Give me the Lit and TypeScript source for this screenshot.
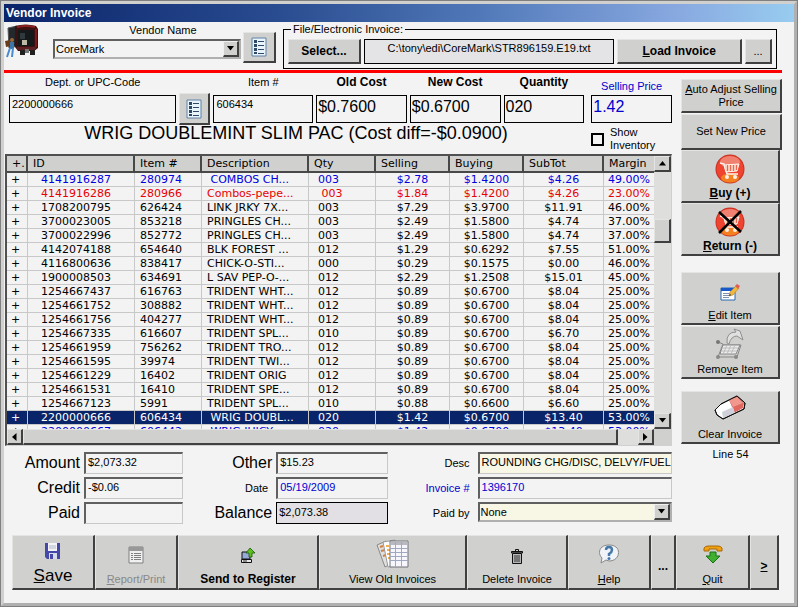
import { LitElement, html, svg, css } from "lit";
import { customElement, property } from "lit/decorators.js";
import { classMap } from "lit/directives/class-map.js";

type Row = [id: string, item: string, desc: string, qty: string, sell: string, buy: string, sub: string, margin: string, kind?: string];

const ROWS: Row[] = [
  ["4141916287", "280974", " COMBOS CH...", "003", "$2.78", "$1.4200", "$4.26", "49.00%", "blue"],
  ["4141916286", "280966", "Combos-pepe...", " 003", "$1.84", "$1.4200", "$4.26", "23.00%", "red"],
  ["1708200795", "626424", "LINK JRKY 7X...", "003", "$7.29", "$3.9700", "$11.91", "46.00%"],
  ["3700023005", "853218", "PRINGLES CH...", "003", "$2.49", "$1.5800", "$4.74", "37.00%"],
  ["3700022996", "852772", "PRINGLES CH...", "003", "$2.49", "$1.5800", "$4.74", "37.00%"],
  ["4142074188", "654640", "BLK FOREST ...", "012", "$1.29", "$0.6292", "$7.55", "51.00%"],
  ["4116800636", "838417", "CHICK-O-STI...", "000", "$0.29", "$0.1575", "$0.00", "46.00%"],
  ["1900008503", "634691", "L SAV PEP-O-...", "012", "$2.29", "$1.2508", "$15.01", "45.00%"],
  ["1254667437", "616763", "TRIDENT WHT...", "012", "$0.89", "$0.6700", "$8.04", "25.00%"],
  ["1254661752", "308882", "TRIDENT WHT...", "012", "$0.89", "$0.6700", "$8.04", "25.00%"],
  ["1254661756", "404277", "TRIDENT WHT...", "012", "$0.89", "$0.6700", "$8.04", "25.00%"],
  ["1254667335", "616607", "TRIDENT SPL...", "010", "$0.89", "$0.6700", "$6.70", "25.00%"],
  ["1254661959", "756262", "TRIDENT TRO...", "012", "$0.89", "$0.6700", "$8.04", "25.00%"],
  ["1254661595", "39974", "TRIDENT TWI...", "012", "$0.89", "$0.6700", "$8.04", "25.00%"],
  ["1254661229", "16402", "TRIDENT ORIG", "012", "$0.89", "$0.6700", "$8.04", "25.00%"],
  ["1254661531", "16410", "TRIDENT SPE...", "012", "$0.89", "$0.6700", "$8.04", "25.00%"],
  ["1254667123", "5991", "TRIDENT SPL...", "010", "$0.88", "$0.6600", "$6.60", "25.00%"],
  ["2200000666", "606434", " WRIG DOUBL...", "020", "$1.42", "$0.6700", "$13.40", "53.00%", "selected"],
  ["2200000667", "606442", " WRIG JUICY...", "020", "$1.42", "$0.6700", "$13.40", "53.00%", "blue"],
];

const cart = svg`<path d="M5 9l4 1 3 10h11" stroke="#fff4ec" stroke-width="1.5"/><path d="M9 11l15-1-2 7-11 1z" fill="#f8c8b8" stroke="#fff4ec"/><path d="M12.500 11v6M15.500 11v6M18.500 11v6M21.500 11v5" stroke="#e86850" stroke-width="1"/><circle cx="12" cy="23" r="2" fill="#fff0e8"/><circle cx="20" cy="23" r="2" fill="#fff0e8"/>`;
const ball = svg`<circle cx="15" cy="15" r="14.5" fill="#c83020"/><circle cx="15" cy="15" r="13.5" fill="#ee4430"/><ellipse cx="15" cy="24" rx="9" ry="4.5" fill="#f48020"/><ellipse cx="15" cy="8" rx="10" ry="6" fill="#f08070"/>`;

const ICONS: Record<string, [number, number, unknown]> = {
  truck: [34, 35, svg`
    <path d="M3 4l9-2 1 20-9 2z" fill="#23282c" stroke="#555" stroke-width="1"/>
    <path d="M10 2q11-3 21 0l2 3v19l-4 3H13l-3-4z" fill="#3b1010"/>
    <path d="M12 3q9-2 18 0" stroke="#8c2020" stroke-width="2" fill="none"/>
    <path d="M13 6h16v16H13z" fill="#15191a"/><path d="M15 9h5v6h-5z" fill="#30393b"/>
    <path d="M30 5h2v18h-2z" fill="#7a1a1a"/><path d="M17 16h5v5h-5z" fill="#bdb9a4"/>
    <path d="M12 23h19v3H12z" fill="#5d2020"/><path d="M15 26h5v5h-5zM25 26h5v5h-5z" fill="#202020"/><path d="M20 25h4v4h-4z" fill="#777"/>
    <path d="M0 17l5-1 1 6-5 1z" fill="#6a3c18"/><circle cx="7" cy="16" r="2" fill="#9a6a3c"/>
    <path d="M5 18h4v7H5z" fill="#3d76ad"/><path d="M5 24l-3 9M8 24l-1 9" stroke="#4a8acc" stroke-width="2"/>`],
  list: [16, 20, svg`
    <path d="M1 1h14v18H1z" fill="#e8f4fa" stroke="#6080a8"/>
    <path d="M3 3h3v3H3zM3 7h3v3H3zM3 11h3v3H3zM3 15h3v2H3z" fill="#304868"/>
    <path d="M7 4.500h6M7 8.500h6M7 12.500h6M7 16.500h6" stroke="#304868"/>`],
  buy: [30, 30, svg`${ball}${cart}`],
  ret: [30, 30, svg`${ball}${cart}<path d="M4 5l22 20M26 4L4 26" stroke="#000" stroke-width="2.500"/>`],
  edit: [20, 18, svg`
    <path d="M1 5h14v12H1z" fill="#fff" stroke="#2868b0"/><path d="M1 5h14v3H1z" fill="#1858c8"/>
    <path d="M3 10.500h7M3 12.500h8M3 14.500h6" stroke="#8090b0"/>
    <path d="M9 13l1-4 6-6 3 2-6 7z" fill="#f0b840" stroke="#b08030" stroke-width=".6"/><path d="M15 3l2-2 3 2-2 3z" fill="#e06050"/><path d="M9 13l1-2 1 1z" fill="#222"/>`],
  remove: [30, 32, svg`
    <path d="M3 14l5 2-5 13h19l4-12H8" stroke="#888"/><path d="M8 17h17l-4 9H5z" fill="#ececec" stroke="#888"/>
    <path d="M12 17l-4 9M16 17l-4 9M20 17l-4 9M7 20h16M6 23h16" stroke="#bcbcbc"/>
    <path d="M12 15q-1-11 9-11l-2-3 6 2 3 9-6-4q-6 0-8 8z" fill="#e0e0e0" stroke="#909090"/>
    <circle cx="3" cy="14" r="2" fill="#777"/><circle cx="3" cy="29" r="2" fill="#888"/><circle cx="21" cy="29" r="2" fill="#888"/>`],
  erase: [32, 25, svg`
    <path d="M1 15l6-6 16-8 8 7-1 6-21 10-6-4z" fill="#fff" stroke="#111"/>
    <path d="M15 5l8-4 7 7-1 5-9 5-2-6z" fill="#e06860"/><path d="M15 5l8-3 6 6-10 4z" fill="#f0988e"/>
    <path d="M8 17l11-5 2 6-12 5z" fill="#d0d0da"/><path d="M1 15l6-6 16-8 8 7-1 6-21 10-6-4z" stroke="#111"/>`],
  save: [16, 16, svg`
    <path d="M0 0h15v16H2l-2-2z" fill="#4448a8"/><path d="M3 0h9v8H3z" fill="#f4f4f8"/><path d="M4 3h7M4 5h7" stroke="#b0b8c8"/>
    <path d="M4 10h8v6H4z" fill="#d8dce8"/><path d="M5 11h3v5H5z" fill="#4448a8"/>`],
  report: [16, 18, svg`
    <path d="M1 1h14v16H1z" fill="#f0f0f0" stroke="#808080"/><path d="M1 1h14v4H1z" fill="#989898"/>
    <path d="M3 7.500h10M3 9.500h10M3 11.500h10M3 13.500h10" stroke="#808080"/><path d="M5.500 6v9" stroke="#f0f0f0"/>`],
  send: [14, 16, svg`
    <path d="M1 4h8v7H1z" fill="#98a8d8" stroke="#111"/><path d="M0.500 11.500h10v3h-10z" fill="#e8e8e8" stroke="#111"/><path d="M2 13h4" stroke="#333"/>
    <path d="M9 0l5 5h-3v4H8V5H5z" fill="#60c020" stroke="#185808" stroke-width=".8"/>`],
  old: [34, 30, svg`
    <path d="M1 6l9-4 6 22-7 4z" fill="#e0e0e0" stroke="#888"/><path d="M4 8l3-1M5 12l4-1M7 17l3-1" stroke="#d08040" stroke-width="2"/>
    <path d="M7 3l12-2 2 26-9 1z" fill="#fff" stroke="#999"/><path d="M10 7h3M11 11h3M11 15h4M12 19h3" stroke="#f0b050" stroke-width="2"/><path d="M15 7v15" stroke="#d07070" stroke-width="2"/>
    <path d="M14 2h18v26H14z" fill="#f6f6fc" stroke="#707078"/><path d="M15 3h16v3H15z" fill="#b8b8c0"/>
    <path d="M14 9.500h18M14 13.500h18M14 17.500h18M14 21.500h18M19.500 3v25M25.500 3v25" stroke="#a0a8c0"/>`],
  trash: [12, 15, svg`
    <path d="M4.500 2V.5h3V2" fill="none" stroke="#111"/><path d="M.5 2.500h11v1.500H.5z" fill="#777" stroke="#111"/>
    <path d="M1.500 4.500h9v10h-9z" fill="#b8b8b8" stroke="#111"/><path d="M4 6v7M6 6v7M8 6v7" stroke="#333"/>`],
  help: [22, 20, svg`
    <path d="M11 1c6 0 9.500 3 9.500 7.500S17 17 11 17l-3-1-5 3 1-5C2 12 1.500 10 1.500 8.500 1.500 4 5 1 11 1z" fill="#f0f4f8" stroke="#888"/>
    <path d="M8 6q0-3 3-3t3 3q0 2-3 4v2" fill="none" stroke="#4878a8" stroke-width="2.500"/><circle cx="11" cy="14.500" r="1.500" fill="#4878a8"/>`],
  quit: [20, 19, svg`
    <path d="M1 6V3q1-2 4-2h10q3 0 4 2v3h-5V4H6v2z" fill="#f0a010" stroke="#a86808"/>
    <path d="M7 7h6v4h4l-7 7-7-7h4z" fill="#40b030" stroke="#187010"/>`],
  up: [9, 5, svg`<path d="M1 4.500h7L4.500 0z" fill="#000"/>`],
  down: [9, 5, svg`<path d="M1 0h7L4.500 4.500z" fill="#000"/>`],
  left: [5, 8, svg`<path d="M4.500 0v8L0 4z" fill="#000"/>`],
  right: [5, 8, svg`<path d="M0 0v8l4.500-4z" fill="#000"/>`],
};

function icon(name: string) {
  const [w, h, body] = ICONS[name];
  return html`<svg width=${w} height=${h} viewBox="0 0 ${w} ${h}" fill="none" aria-hidden="true">${body}</svg>`;
}

const shared = css`
  * { box-sizing: border-box; }
  svg { display: block; flex: none; }
  button {
    display: flex; align-items: center; justify-content: center;
    min-width: 0; margin: 0; padding: 0; font: inherit; color: #000;
    background: #d0d1ce; border: solid; border-width: 1px 2px 2px 1px;
    border-color: #e4e4e2 #404040 #404040 #e4e4e2; border-radius: 0;
  }
`;

@customElement("item-grid")
export class ItemGrid extends LitElement {
  @property({ attribute: false }) rows: Row[] = [];

  static styles = [shared, css`
    :host {
      display: grid; grid-template: minmax(0, 1fr) 16px / minmax(0, 1fr) 17px;
      font: 11px/13px "DejaVu Sans", sans-serif;
      border: solid; border-width: 2px 1px 1px 2px; border-color: #505050 #d0d0d0 #d0d0d0 #505050;
    }
    .view { overflow: hidden; }
    table { width: 100%; table-layout: fixed; border-collapse: separate; border-spacing: 0; }
    th, td { padding: 0; white-space: pre; overflow: hidden; text-align: left; font-weight: 400; }
    th { height: 17px; padding-left: 5px; background: #d0d1ce; border-right: 2px solid #484848; border-bottom: 2px solid #484848; }
    th:last-child { border-right: 0; }
    td { height: 14px; padding-left: 5px; border-right: 1px solid #c8c8c8; border-bottom: 1px solid #c8c8c8; }
    td:last-child { border-right: 0; }
    .mark { width: 21px; } .id { width: 107px; } .item { width: 67px; } .desc { width: 107px; }
    .qty { width: 67px; } .sell { width: 74px; } .buy { width: 74px; } .sub { width: 80px; }
    td.mark { padding-left: 4px; }
    td.id { padding-left: 13px; }
    td.qty { padding-left: 9px; }
    td.sell, td.buy, td.sub { text-align: center; padding-left: 0; }
    td.margin { padding-left: 4px; }
    .blue td { color: #0000e0; } .red td { color: #e80000; }
    .blue td.mark, .red td.mark { color: #000; }
    .selected td { background: #0a246a; color: #fff; }
    .vbar { display: grid; grid-template-rows: 16px 48fr 24px 173fr 16px; background: #dededd; }
    .hbar { display: grid; grid-template-columns: 16px 594fr 20fr 16px; background: #dededd; }
    .corner { background: #d0d1ce; }
  `];

  render() {
    const cols = ["mark", "id", "item", "desc", "qty", "sell", "buy", "sub", "margin"];
    const heads = ["+.", "ID", "Item #", "Description", "Qty", "Selling", "Buying", "SubTot", "Margin"];
    return html`
      <div class="view">
        <table>
          <thead><tr>${heads.map((h, i) => html`<th class=${cols[i]} scope="col">${h}</th>`)}</tr></thead>
          <tbody>
            ${this.rows.map((r) => html`<tr class=${r[8] ?? ""}><td class="mark">+</td>${r.slice(0, 8).map((v, i) => html`<td class=${cols[i + 1]}>${v}</td>`)}</tr>`)}
          </tbody>
        </table>
      </div>
      <div class="vbar">
        <button aria-label="Scroll up">${icon("up")}</button><span></span>
        <button aria-label="Scroll position"></button><span></span>
        <button aria-label="Scroll down">${icon("down")}</button>
      </div>
      <div class="hbar">
        <button aria-label="Scroll left">${icon("left")}</button>
        <button aria-label="Horizontal position"></button><span></span>
        <button aria-label="Scroll right">${icon("right")}</button>
      </div>
      <div class="corner"></div>`;
  }
}

@customElement("app-root")
export class AppRoot extends LitElement {
  static styles = [shared, css`
    :host { display: block; font: 11px/13px "Liberation Sans", Arial, sans-serif; color: #000; }
    .window {
      display: flex; flex-direction: column; height: 100vh; min-height: 560px;
      background: #f3f3f3; border: solid; border-width: 4px; border-color: #d0d1ce #b0b0b0 #b0b0b0 #d0d1ce;
      outline: 1px solid #808080; outline-offset: -1px;
    }
    .title {
      flex: none; height: 18px; padding-left: 2px; color: #fff; font-weight: 700; font-size: 12px; line-height: 18px;
      background: linear-gradient(90deg, #0a246a, #2a4c90 35%, #5078b8 60%, #88a8e0 85%, #98ccf0);
    }
    .bold { font-weight: 700; font-size: 12px; }
    .blue { color: #0000d0; }
    input, select {
      width: 100%; min-width: 0; margin: 0; padding: 0 2px 3px; font: inherit; color: inherit; background: transparent;
      border: 1px solid #000; border-radius: 0; appearance: none; outline: 0;
    }
    .sunk { border: solid; border-width: 2px 1px 1px 2px; border-color: #606060 #c8c8c8 #c8c8c8 #606060; }
    .cream { background: #f8f6e4; }
    .combo { position: relative; display: flex; border: solid; border-width: 2px; border-color: #606060 #b0b0b0 #b0b0b0 #606060; }
    .combo select { border: 0; padding: 0 18px 0 1px; }
    .arrow {
      position: absolute; top: 0; right: 0; bottom: 0; width: 16px; display: flex; align-items: center; justify-content: center;
      pointer-events: none; background: #d0d1ce; border: solid; border-width: 1px 2px 2px 1px; border-color: #f0f0f0 #404040 #404040 #f0f0f0;
    }
    header {
      flex: none; display: grid; grid-template-columns: 34px 204fr 33px 501fr; align-items: start;
      height: 48px; padding: 0 17px 0 1px;
    }
    .truck { margin-top: 2px; }
    .vendor { margin: 2px 2px 0 14px; text-align: center; }
    .vendor label { display: block; padding-left: 32px; }
    .vendor .combo { height: 20px; margin-top: 2px; text-align: left; }
    .pick { height: 31px; margin-top: 10px; }
    fieldset { min-width: 0; margin: 1px 0 0 7px; padding: 0 4px 4px; border: 1px solid #000; }
    legend { padding: 0 2px; margin-left: 3px; height: 13px; }
    .load { display: grid; grid-template-columns: 73fr 251fr 125fr 27fr; gap: 3px; height: 25px; margin-top: 3px; }
    .path { text-align: center; background: #e4e3e6; padding-bottom: 6px; }
    .rule { flex: none; height: 3px; margin: 0 12px 0 0; border: 0; background: #f00; }
    .body { flex: 1; min-height: 0; display: grid; grid-template-columns: minmax(0, 1fr) 101px; gap: 9px; padding-right: 12px; }
    .main { display: flex; flex-direction: column; min-height: 0; padding: 0 0 0 1px; }
    .fields { display: grid; grid-template-columns: 168fr 31px 100fr 91fr 91fr 81fr 85fr; grid-template-rows: 20px 28px; column-gap: 3px; row-gap: 2px; padding-left: 4px; }
    .fields label { text-align: center; padding-top: 3px; }
    .fields label.blue { padding: 7px 0 0 4px; }
    .fields input { height: 28px; padding-bottom: 10px; }
    .fields .big { font-size: 16px; padding: 0 1px 5px; }
    .fields .price { width: auto; margin-left: 4px; }
    .fields .lookup { grid-row: 2; grid-column: 2; height: 32px; margin-top: -2px; }
    .status { display: grid; grid-template-columns: 1fr 81px; align-items: center; height: 31px; }
    h1 { margin: 0; font-size: 18px; line-height: 20px; font-weight: 400; text-align: center; padding: 0 4px 12px 0; }
    .show { display: flex; align-items: center; gap: 6px; }
    .show input { width: 13px; height: 13px; flex: none; padding: 0; border: 2px solid #000; }
    item-grid { flex: 1; min-height: 0; }
    .totals {
      flex: none; display: grid; grid-template-columns: 75px 99fr 85px 111fr 82px 194fr; grid-auto-rows: 22px;
      gap: 3px 4px; align-items: center; padding: 6px 0 11px;
    }
    .totals label { text-align: right; white-space: nowrap; padding-right: 4px; }
    .totals .lg { font-size: 16px; line-height: 20px; padding: 0; }
    .totals input { height: 22px; padding-right: 0; }
    .totals .combo { height: 20px; align-self: start; }
    .due { background: #e2e0e4; }
    .side { display: flex; flex-direction: column; padding-top: 6px; }
    .side button { flex: none; width: 99px; height: 53px; flex-direction: column; justify-content: flex-end; gap: 3px; padding-bottom: 1px; }
    .side .wide { width: 101px; height: 36px; justify-content: center; padding: 0; }
    .side .roomy { gap: 8px; }
    .side .first { height: 34px; margin-bottom: 1px; }
    .side .group { margin-top: 16px; }
    .side .next { margin-top: 1px; }
    .side .last { margin-top: 12px; }
    .line { width: 99px; text-align: center; margin: 4px 0 0; }
    footer {
      flex: none; display: grid; grid-template-columns: 83fr 83fr 141fr 148fr 101fr 83fr 25fr 74fr 29fr;
      height: 55px; margin: 0 15px 13px 8px;
    }
    footer button { flex-direction: column; justify-content: flex-end; gap: 9px; padding-bottom: 2px; white-space: nowrap; }
    footer .tight { gap: 4px; }
    footer .mid { justify-content: center; padding: 8px 0 0; }
    footer .save { font-size: 17px; line-height: 20px; gap: 7px; }
    button:disabled { color: #888; }
  `];

  private total(id: string, text: string, value: string, opts: { lg?: boolean; blue?: boolean; blueLabel?: boolean; cream?: boolean; due?: boolean } = {}) {
    return html`
      <label for=${id} class=${classMap({ lg: !!opts.lg, blue: !!opts.blueLabel })}>${text}</label>
      <input id=${id} class=${classMap({ sunk: !opts.due, blue: !!opts.blue, cream: !!opts.cream, due: !!opts.due })} .value=${value} ?readonly=${!!opts.due}>`;
  }

  render() {
    return html`
      <div class="window">
        <div class="title">Vendor Invoice</div>
        <header>
          <div class="truck">${icon("truck")}</div>
          <div class="vendor">
            <label for="vendor">Vendor Name</label>
            <div class="combo"><select id="vendor"><option>CoreMark</option></select><span class="arrow">${icon("down")}</span></div>
          </div>
          <button class="pick" aria-label="Vendor list">${icon("list")}</button>
          <fieldset>
            <legend>File/Electronic Invoice:</legend>
            <div class="load">
              <button class="bold">Select...</button>
              <input class="path" aria-label="Invoice file" readonly .value=${"C:\\tony\\edi\\CoreMark\\STR896159.E19.txt"}>
              <button class="bold"><span><u>L</u>oad Invoice</span></button>
              <button>...</button>
            </div>
          </fieldset>
        </header>
        <hr class="rule">
        <div class="body">
          <div class="main">
            <div class="fields">
              <label for="upc">Dept. or UPC-Code</label><span></span>
              <label for="itemno">Item #</label>
              <label class="bold" for="oldcost">Old Cost</label>
              <label class="bold" for="newcost">New Cost</label>
              <label class="bold" for="quantity">Quantity</label>
              <label class="blue" for="price">Selling Price</label>
              <input id="upc" .value=${"2200000666"}>
              <button class="lookup" aria-label="Item list">${icon("list")}</button>
              <input id="itemno" .value=${"606434"}>
              <input id="oldcost" class="big" .value=${"$0.7600"}>
              <input id="newcost" class="big" .value=${"$0.6700"}>
              <input id="quantity" class="big" .value=${"020"}>
              <input id="price" class="big price blue" .value=${"1.42"}>
            </div>
            <div class="status">
              <h1>WRIG DOUBLEMINT SLIM PAC (Cost diff=-$0.0900)</h1>
              <label class="show"><input type="checkbox"><span>Show Inventory</span></label>
            </div>
            <item-grid .rows=${ROWS}></item-grid>
            <div class="totals">
              ${this.total("amount", "Amount", "$2,073.32", { lg: true })}
              ${this.total("other", "Other", "$15.23", { lg: true })}
              ${this.total("desc", "Desc", "ROUNDING CHG/DISC, DELVY/FUEL", { cream: true })}
              ${this.total("credit", "Credit", "-$0.06", { lg: true })}
              ${this.total("date", "Date", "05/19/2009", { blue: true })}
              ${this.total("invno", "Invoice #", "1396170", { blue: true, blueLabel: true })}
              ${this.total("paid", "Paid", "", { lg: true })}
              ${this.total("balance", "Balance", "$2,073.38", { lg: true, due: true })}
              <label for="paidby">Paid by</label>
              <div class="combo cream"><select id="paidby"><option>None</option></select><span class="arrow">${icon("down")}</span></div>
            </div>
          </div>
          <div class="side">
            <button class="wide first"><span><u>A</u>uto Adjust Selling Price</span></button>
            <button class="wide">Set New Price</button>
            <button class="bold">${icon("buy")}<span><u>B</u>uy (+)</span></button>
            <button class="bold">${icon("ret")}<span><u>R</u>eturn (-)</span></button>
            <button class="group roomy">${icon("edit")}<span><u>E</u>dit Item</span></button>
            <button class="next">${icon("remove")}<span>Remo<u>v</u>e Item</span></button>
            <button class="last roomy">${icon("erase")}<span>Clear Invoice</span></button>
            <p class="line">Line 54</p>
          </div>
        </div>
        <footer>
          <button class="save">${icon("save")}<span><u>S</u>ave</span></button>
          <button disabled>${icon("report")}<span><u>R</u>eport/Print</span></button>
          <button class="bold">${icon("send")}<span>Send to Register</span></button>
          <button class="tight">${icon("old")}<span>View Old Invoices</span></button>
          <button>${icon("trash")}<span>Delete Invoice</span></button>
          <button>${icon("help")}<span><u>H</u>elp</span></button>
          <button class="mid bold">...</button>
          <button>${icon("quit")}<span><u>Q</u>uit</span></button>
          <button class="mid bold"><u>&gt;</u></button>
        </footer>
      </div>`;
  }
}
